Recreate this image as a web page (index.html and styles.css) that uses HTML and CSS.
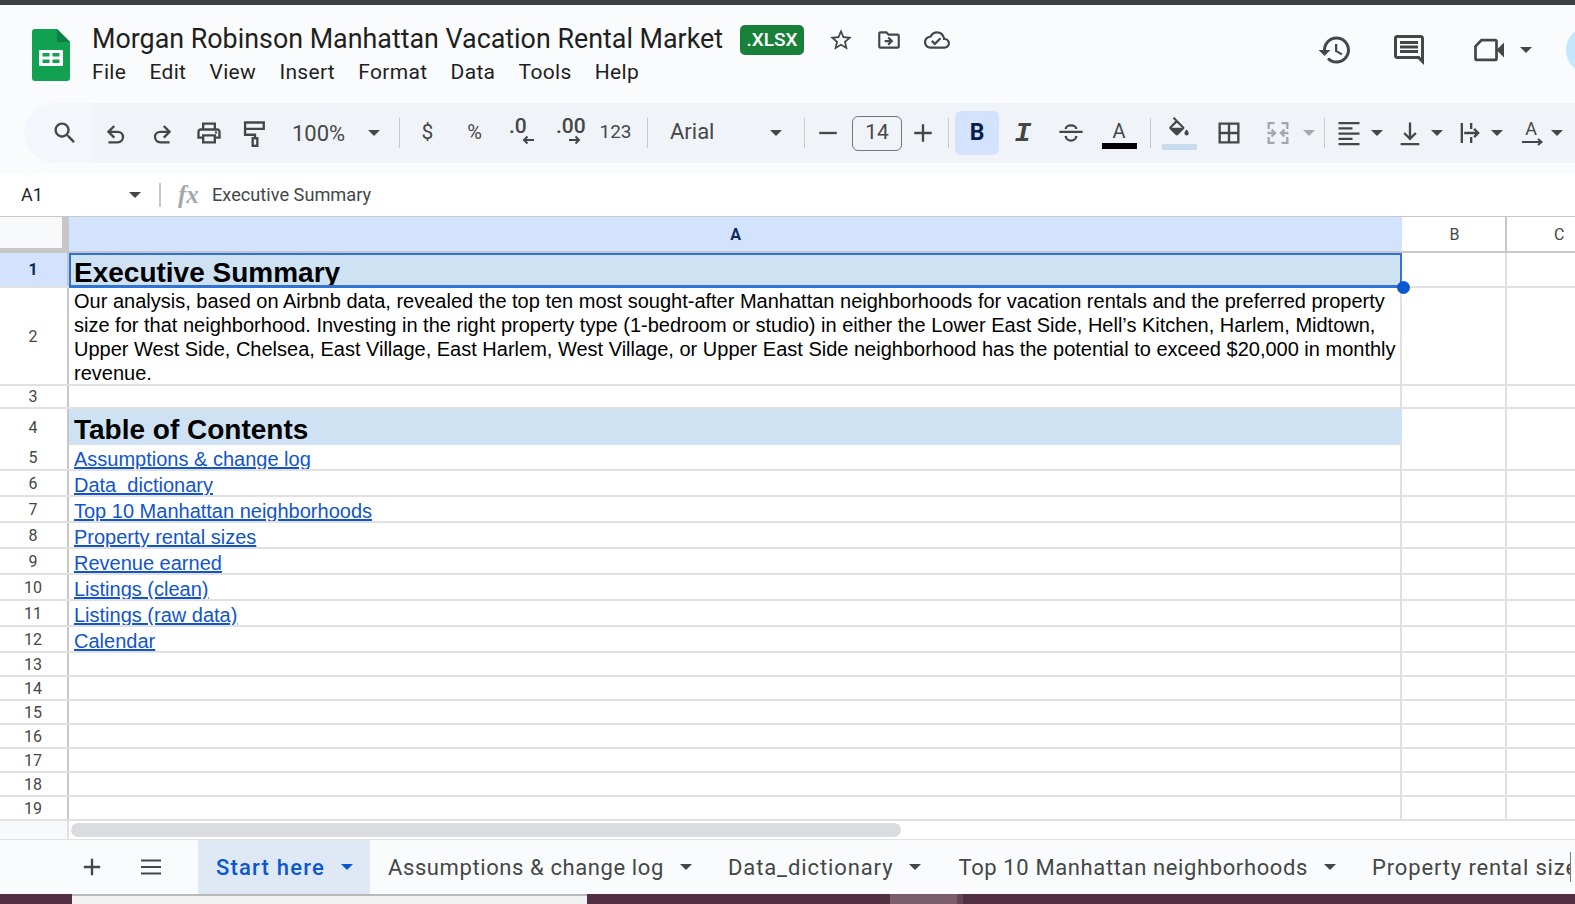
FILE: index.html
```html
<!DOCTYPE html>
<html>
<head>
	<meta charset="UTF-8">
	<title>Morgan Robinson Manhattan Vacation Rental Market</title>
	<link rel="stylesheet" href="styles.css">
</head>
<body>
	<div class="topline"></div>
	<header class="head">
		<svg class="logo" viewBox="0 0 38 52"><path fill="#12a150" d="M3 0h22l13 13v36a3 3 0 0 1-3 3H3a3 3 0 0 1-3-3V3a3 3 0 0 1 3-3z"/><path fill="#0b8043" d="M25 0l13 13H25z"/><path fill="#fff" fill-rule="evenodd" d="M8 21h22a1 1 0 0 1 1 1v14a1 1 0 0 1-1 1H8a1 1 0 0 1-1-1V22a1 1 0 0 1 1-1zm2.500 3v3.500h7V24zm10 0v3.500h7V24zm-10 6.500V34h7v-3.500zm10 0V34h7v-3.500z"/></svg>
		<div class="docinfo">
			<div class="titlerow">
				<span class="doctitle">Morgan Robinson Manhattan Vacation Rental Market</span>
				<span class="badge">.XLSX</span>
				<svg class="ic ic-star" viewBox="0 0 24 24"><path d="M22 9.240l-7.190-.620L12 2 9.190 8.630 2 9.240l5.460 4.730L5.820 21 12 17.270 18.180 21l-1.630-7.030L22 9.240zM12 15.400l-3.760 2.270 1-4.280-3.320-2.880 4.380-.380L12 6.100l1.710 4.040 4.380.380-3.320 2.880 1 4.280L12 15.400z"/></svg>
				<svg class="ic ic-move" viewBox="0 0 24 24"><path d="M20 6h-8l-2-2H4c-1.100 0-1.990.900-1.990 2L2 18c0 1.100.900 2 2 2h16c1.100 0 2-.900 2-2V8c0-1.100-.900-2-2-2zm0 12H4V6h5.170l2 2H20v10zm-8.010-9l-1.410 1.410L12.160 12H8v2h4.160l-1.590 1.590L11.990 17 16 13.010 11.990 9z"/></svg>
				<svg class="ic ic-cloud" viewBox="0 0 24 24"><path d="M19.350 10.040C18.670 6.590 15.640 4 12 4 9.110 4 6.600 5.640 5.350 8.040 2.340 8.360 0 10.910 0 14c0 3.310 2.690 6 6 6h13c2.760 0 5-2.240 5-5 0-2.640-2.050-4.780-4.650-4.960zM19 18H6c-2.210 0-4-1.790-4-4 0-2.050 1.530-3.760 3.560-3.970l1.070-.110.500-.950C8.080 7.140 9.940 6 12 6c2.620 0 4.880 1.860 5.390 4.430l.300 1.500 1.530.110c1.560.100 2.780 1.410 2.780 2.960 0 1.650-1.350 3-3 3zm-9-3.820l-2.090-2.090L6.500 13.500 10 17l6.010-6.010-1.410-1.410z"/></svg>
			</div>
			<nav class="menu">
				<a>File</a><a>Edit</a><a>View</a><a>Insert</a><a>Format</a><a>Data</a><a>Tools</a><a>Help</a>
			</nav>
		</div>
		<div class="headright">
			<svg class="big" viewBox="0 0 24 24"><path d="M13 3c-4.970 0-9 4.030-9 9H1l3.890 3.890.070.140L9 12H6c0-3.870 3.130-7 7-7s7 3.130 7 7-3.130 7-7 7c-1.930 0-3.680-.790-4.940-2.060l-1.420 1.420C8.270 19.990 10.510 21 13 21c4.970 0 9-4.030 9-9s-4.030-9-9-9zm-1 5v5l4.280 2.540.720-1.210-3.500-2.080V8H12z"/></svg>
			<svg class="big big-comment" viewBox="0 0 24 24"><path d="M21.990 4c0-1.100-.890-2-1.990-2H4c-1.100 0-2 .900-2 2v12c0 1.100.900 2 2 2h14l4 4-.010-18zM20 4v13.170L18.830 16H4V4h16zM6 12h12v2H6zm0-3h12v2H6zm0-3h12v2H6z"/></svg>
			<svg class="big big-video" viewBox="0 0 24 24"><path fill="none" stroke="#444746" stroke-width="1.800" d="M7 5.400H16a1 1 0 0 1 1 1v11.200a1 1 0 0 1-1 1H4a1 1 0 0 1-1-1V9.500z"/><path d="M17 12l5-5v10z"/></svg>
			<i class="caret caret-video"></i>
			<div class="avatar"></div>
		</div>
	</header>

	<div class="toolband">
		<div class="toolbar">
			<span class="t t-search"><svg viewBox="0 0 24 24"><path d="M15.500 14h-.790l-.280-.270C15.410 12.590 16 11.110 16 9.500 16 5.910 13.090 3 9.500 3S3 5.910 3 9.500 5.910 16 9.500 16c1.610 0 3.090-.590 4.230-1.570l.270.280v.790l5 4.990L20.490 19l-4.990-5zm-6 0C7.010 14 5 11.990 5 9.500S7.010 5 9.500 5 14 7.010 14 9.500 11.990 14 9.500 14z"/></svg></span>
			<span class="t t-undo"><svg class="line" viewBox="0 0 24 24"><path d="M10.500 6L5.500 11l5 5M5.500 11h8a4.500 4.500 0 0 1 0 9h-8"/></svg></span>
			<span class="t"><svg class="line" viewBox="0 0 24 24"><path d="M13.500 6l5 5-5 5M18.500 11h-8a4.500 4.500 0 0 0 0 9h8"/></svg></span>
			<span class="t t-print"><svg viewBox="0 0 24 24"><path d="M19 8h-1V3H6v5H5c-1.660 0-3 1.340-3 3v6h4v4h12v-4h4v-6c0-1.660-1.340-3-3-3zM8 5h8v3H8V5zm8 12v2H8v-4h8v2zm2-2v-2H6v2H4v-4c0-.550.450-1 1-1h14c.550 0 1 .450 1 1v4h-2z"/><circle cx="18" cy="11.500" r="1"/></svg></span>
			<span class="t"><svg class="line" viewBox="0 0 24 24"><path d="M3.500 3h16v5.500h-16zM3.500 8.500v5H12v3"/><rect x="10" y="16.500" width="4" height="6.500"/></svg></span>
			<span class="zoombox">100%<i class="caret"></i></span>
			<span class="sep sep-a"></span>
			<span class="t t-w47 t-dollar">$</span>
			<span class="t t-w47 t-pct">%</span>
			<span class="t t-w47 t-dec"><b>.0</b><svg viewBox="0 0 12 10"><path d="M12 5H2M5.500 1.500L2 5l3.500 3.500"/></svg></span>
			<span class="t t-w47 t-dec"><b>.00</b><svg viewBox="0 0 12 10"><path d="M0 5h10M6.500 1.500L10 5 6.500 8.500"/></svg></span>
			<span class="t t-w47 t-num">123</span>
			<span class="sep sep-b"></span>
			<span class="fontbox"><span class="fontname">Arial</span><i class="caret"></i></span>
			<span class="sep sep-c"></span>
			<span class="t t-sign"><svg class="line" viewBox="0 0 24 24"><path d="M4.500 12h15"/></svg></span>
			<span class="sizebox">14</span>
			<span class="t t-plus"><svg class="line" viewBox="0 0 24 24"><path d="M4.500 12h15M12 4.500v15"/></svg></span>
			<span class="sep sep-d"></span>
			<span class="t t-bold">B</span>
			<span class="t t-italic">I</span>
			<span class="t t-w48"><svg class="line" viewBox="0 0 24 24"><path d="M2 11h20M7.500 8.500a4.500 3 0 0 1 9 0M7.500 14.500a4.500 4 0 0 0 9 0"/></svg></span>
			<span class="t t-w48 t-color"><span>A</span><i class="bar bar-black"></i></span>
			<span class="sep sep-e"></span>
			<span class="t t-fill"><svg viewBox="0 0 24 24"><path d="M16.560 8.940L7.620 0 6.210 1.410l2.380 2.380-5.150 5.150c-.590.590-.590 1.540 0 2.120l5.500 5.500c.290.290.680.440 1.060.440s.770-.150 1.060-.440l5.500-5.500c.590-.580.590-1.530 0-2.120zM5.210 10L10 5.210 14.790 10H5.210zM19 11.500s-2 2.170-2 3.500c0 1.100.900 2 2 2s2-.900 2-2c0-1.330-2-3.500-2-3.500z"/></svg><i class="bar bar-fill"></i></span>
			<span class="t t-borders"><svg viewBox="0 0 24 24"><path d="M3 3v18h18V3H3zm8 16H5v-6h6v6zm0-8H5V5h6v6zm8 8h-6v-6h6v6zm0-8h-6V5h6v6z"/></svg></span>
			<span class="t t-merge"><svg class="line dim" viewBox="0 0 24 24"><path d="M9 3.500H4v5M15 3.500h5v5M9 20.500H4v-5M15 20.500h5v-5M3 12h6M6.500 9l3 3-3 3M21 12h-6M17.500 9l-3 3 3 3"/></svg></span>
			<span class="t t-mergedrop"><i class="caret caret-dim"></i></span>
			<span class="sep sep-f"></span>
			<span class="t t-ic"><svg class="line" viewBox="0 0 24 24"><path d="M3 3.500h18M3 8h12M3 12.500h18M3 17h12M3 21.500h18"/></svg></span>
			<span class="t t-drop"><i class="caret"></i></span>
			<span class="t t-ic t-s5"><svg class="line" viewBox="0 0 24 24"><path d="M12 3v14M7 12l5 5 5-5M4 21.500h16"/></svg></span>
			<span class="t t-drop t-d20"><i class="caret"></i></span>
			<span class="t t-ic t-s6"><svg class="line" viewBox="0 0 24 24"><path d="M5 3.500v17M13 3.500v5M13 15.500v5M7 12h12M15.500 8.500L19 12l-3.500 3.500"/></svg></span>
			<span class="t t-drop t-d20"><i class="caret"></i></span>
			<span class="t t-ic t-s7 t-rot"><span>A</span><svg class="line" viewBox="0 0 24 8"><path d="M3 4h19M19 1l3.500 3L19 7"/></svg></span>
			<span class="t t-drop t-d18"><i class="caret"></i></span>
		</div>
	</div>

	<div class="formula">
		<span class="namebox">A1</span>
		<i class="caret caret-name"></i>
		<span class="sep sep-name"></span>
		<span class="fx">fx</span>
		<span class="ftext">Executive Summary</span>
	</div>

	<main class="sheet">
		<div class="row colhead">
			<div class="rh corner"></div>
			<div class="ca on">A</div>
			<div class="cb">B</div>
			<div class="cc">C</div>
		</div>
		<div class="row r1">
			<div class="rh on">1</div>
			<div class="ca sel"><span class="h">Executive Summary</span><i class="handle"></i></div>
			<div class="cb"></div><div class="cc"></div>
		</div>
		<div class="row r2">
			<div class="rh">2</div>
			<div class="ca body">Our analysis, based on Airbnb data, revealed the top ten most sought-after Manhattan neighborhoods for vacation rentals and the preferred property size for that neighborhood. Investing in the right property type (1-bedroom or studio) in either the Lower East Side, Hell’s Kitchen, Harlem, Midtown, Upper West Side, Chelsea, East Village, East Harlem, West Village, or Upper East Side neighborhood has the potential to exceed $20,000 in monthly revenue.</div>
			<div class="cb"></div><div class="cc"></div>
		</div>
		<div class="row r3"><div class="rh">3</div><div class="ca"></div><div class="cb"></div><div class="cc"></div></div>
		<div class="row r4">
			<div class="rh">4</div>
			<div class="ca toc"><span class="h">Table of Contents</span></div>
			<div class="cb"></div><div class="cc"></div>
		</div>
		<div class="row rl"><div class="rh">5</div><div class="ca"><a>Assumptions &amp; change log</a></div><div class="cb"></div><div class="cc"></div></div>
		<div class="row rl"><div class="rh">6</div><div class="ca"><a>Data_dictionary</a></div><div class="cb"></div><div class="cc"></div></div>
		<div class="row rl"><div class="rh">7</div><div class="ca"><a>Top 10 Manhattan neighborhoods</a></div><div class="cb"></div><div class="cc"></div></div>
		<div class="row rl"><div class="rh">8</div><div class="ca"><a>Property rental sizes</a></div><div class="cb"></div><div class="cc"></div></div>
		<div class="row rl"><div class="rh">9</div><div class="ca"><a>Revenue earned</a></div><div class="cb"></div><div class="cc"></div></div>
		<div class="row rl"><div class="rh">10</div><div class="ca"><a>Listings (clean)</a></div><div class="cb"></div><div class="cc"></div></div>
		<div class="row rl"><div class="rh">11</div><div class="ca"><a>Listings (raw data)</a></div><div class="cb"></div><div class="cc"></div></div>
		<div class="row rl"><div class="rh">12</div><div class="ca"><a>Calendar</a></div><div class="cb"></div><div class="cc"></div></div>
		<div class="row re"><div class="rh">13</div><div class="ca"></div><div class="cb"></div><div class="cc"></div></div>
		<div class="row re"><div class="rh">14</div><div class="ca"></div><div class="cb"></div><div class="cc"></div></div>
		<div class="row re"><div class="rh">15</div><div class="ca"></div><div class="cb"></div><div class="cc"></div></div>
		<div class="row re"><div class="rh">16</div><div class="ca"></div><div class="cb"></div><div class="cc"></div></div>
		<div class="row re"><div class="rh">17</div><div class="ca"></div><div class="cb"></div><div class="cc"></div></div>
		<div class="row re"><div class="rh">18</div><div class="ca"></div><div class="cb"></div><div class="cc"></div></div>
		<div class="row re"><div class="rh">19</div><div class="ca"></div><div class="cb"></div><div class="cc"></div></div>
		<div class="scrollrow">
			<div class="scrollcorner"></div>
			<div class="thumb"></div>
		</div>
	</main>

	<footer class="tabs">
		<span class="addsheet"><svg class="line" viewBox="0 0 24 24"><path d="M5 12h14M12 5v14"/></svg></span>
		<span class="allsheets"><svg class="line" viewBox="0 0 24 24"><path d="M2 5.500h20M2 12h20M2 18.500h20"/></svg></span>
		<div class="tablist">
			<div class="tab active">Start here<i class="caret"></i></div>
			<div class="tab t2">Assumptions &amp; change log<i class="caret"></i></div>
			<div class="tab t3">Data_dictionary<i class="caret"></i></div>
			<div class="tab t4">Top 10 Manhattan neighborhoods<i class="caret"></i></div>
			<div class="tab t5">Property rental sizes</div>
		</div>
		<span class="tabend"></span>
	</footer>

	<div class="desk">
		<div class="win"></div>
		<div class="task"></div>
		<div class="task2"></div>
	</div>
</body>
</html>
```

FILE: styles.css
```css
*{
	box-sizing: border-box;
}
html,body{
	margin: 0;
	height: 904px;
	overflow: hidden;
	background: #fff;
}
body{
	font-family: Roboto, "Liberation Sans", sans-serif;
	color: #444746;
	display: flex;
	flex-direction: column;
}
svg{
	fill: #444746;
	display: block;
}
svg.line{
	fill: none;
	stroke: #444746;
	stroke-width: 2;
}
svg.dim{
	stroke: #a5a8ab;
}

.topline{
	height: 5px;
	background: #3c4043;
}

/* title + menus */
.head{
	height: 98px;
	background: #f9fbfd;
	display: flex;
	position: relative;
}
.logo{
	width: 38px;
	height: 52px;
	margin: 24px 0 0 32px;
}
.docinfo{
	margin-left: 22px;
}
.titlerow{
	display: flex;
	align-items: center;
	height: 30px;
	margin-top: 19px;
}
.doctitle{
	font-size: 26.85px;
	color: #1f1f1f;
	white-space: nowrap;
	width: 648px;
}
.badge{
	width: 64px;
	height: 30px;
	margin-top: 2px;
	border-radius: 5px;
	background: #188038;
	color: #fff;
	font-size: 19px;
	font-weight: 500;
	line-height: 30px;
	text-align: center;
}
.ic{
	width: 26px;
	height: 26px;
	margin-top: 2px;
}
.ic-star{
	margin-left: 24px;
}
.ic-move,.ic-cloud{
	margin-left: 22px;
}
.menu{
	display: flex;
	margin-top: 6px;
	font-size: 21px;
	letter-spacing: 0.3px;
	color: #1f1f1f;
}
.menu a{
	margin-right: 23.3px;
	white-space: nowrap;
}
.headright{
	position: absolute;
	top: 21px;
	left: 1317px;
	display: flex;
	align-items: center;
}
.big{
	width: 36px;
	height: 36px;
}
.big-comment{
	margin-left: 38px;
}
.big-video{
	margin-left: 44px;
}
.caret{
	display: inline-block;
	width: 0;
	height: 0;
	border-left: 6px solid transparent;
	border-right: 6px solid transparent;
	border-top: 6px solid #444746;
}
.caret-video{
	margin-left: 13px;
}
.avatar{
	width: 48px;
	height: 48px;
	flex: none;
	border-radius: 50%;
	background: #c2e7ff;
	margin-left: 34px;
}

/* toolbar */
.toolband{
	height: 72px;
	background: #f9fbfd;
}
.toolbar{
	height: 60px;
	margin-left: 24px;
	width: 1620px;
	padding-left: 18px;
	border-radius: 30px;
	background: linear-gradient(90deg, #f3f6fb 68px, #f0f4f9 68px);
	display: flex;
	align-items: center;
}
.t{
	width: 46px;
	height: 44px;
	flex: none;
	display: flex;
	align-items: center;
	justify-content: center;
	font-size: 20px;
	position: relative;
}
.t svg{
	width: 28px;
	height: 28px;
}
.t-undo{ margin-left: 5px; }
.t-print{ margin-left: 1px; }
.t-w47{ width: 47px; }
.t-w48{ width: 48px; }
.t-dollar{ font-size: 21px; padding-bottom: 3px; }
.t-pct{ font-size: 20px; padding-bottom: 3px; }
.t-num{ font-size: 19px; padding-bottom: 3px; }
.zoombox{
	width: 114px;
	flex: none;
	padding-left: 14px;
	font-size: 22px;
	display: flex;
	align-items: center;
	justify-content: space-between;
	padding-right: 12px;
}
.sep{
	width: 1px;
	height: 30px;
	flex: none;
	background: #c7c7c7;
}
.sep-a{ margin: 0 4px 0 7px; }
.sep-b{ margin-left: 8px; }
.fontbox{
	width: 149px;
	flex: none;
	padding: 0 15px 0 22px;
	font-size: 22px;
	display: flex;
	align-items: center;
	justify-content: space-between;
}
.fontname{
	padding-bottom: 3px;
}
.sep-c{ margin-left: 7px; }
.sizebox{
	width: 50px;
	height: 35px;
	flex: none;
	margin-left: 1px;
	border: 1px solid #747775;
	border-radius: 6px;
	text-align: center;
	font-size: 21px;
	line-height: 31px;
}
.t-plus{ width: 42px; }
.sep-d{ margin-left: 4px; }
.t-bold{
	margin-left: 6px;
	width: 44px;
	background: #d3e3fd;
	border-radius: 6px;
	color: #041e49;
	font-weight: 700;
	font-size: 23px;
	padding-bottom: 2px;
}
.t-italic{
	margin-left: 1px;
	font-family: "Liberation Mono", monospace;
	font-style: italic;
	font-weight: 700;
	font-size: 28px;
}
.t-italic + .t-w48{ margin-left: 1px; }
.t-color{
	flex-direction: column;
	font-size: 20px;
}
.t-color span{
	line-height: 22px;
	margin-top: 2px;
}
.bar{
	display: block;
	width: 35px;
	height: 6px;
	margin-top: 1px;
}
.bar-black{ background: #000; }
.bar-fill{ background: #c9dcef; }
.sep-e{ margin-left: 7px; }
.t-fill{
	margin-left: 5px;
	flex-direction: column;
}
.t-fill svg{ width: 26px; height: 26px; }
.t-borders{ margin-left: 4px; }
.t-merge{ margin-left: 3px; }
.t-mergedrop{ width: 15px; }
.caret-dim{ border-top-color: #a5a8ab; }
.sep-f{ margin-left: 8px; }
.t-ic{ width: 34px; margin-left: 7px; }
.t-s5{ margin-left: 5px; }
.t-s6{ margin-left: 6px; }
.t-s7{ margin-left: 7px; }
.t-drop{ width: 22px; }
.t-d20{ width: 20px; }
.t-d18{ width: 18px; }
.t-dec{
	flex-direction: column;
	align-items: flex-start;
	justify-content: flex-start;
	padding: 5px 0 0 11px;
}
.t-dec b{
	font-weight: 500;
	font-size: 21px;
	line-height: 20px;
}
.t-dec svg{
	width: 12px;
	height: 10px;
	fill: none;
	stroke: #444746;
	stroke-width: 2;
	margin: -1px 0 0 13px;
}
.t-rot{
	flex-direction: column;
	font-size: 18px;
}
.t-rot span{ line-height: 18px; }
.t-rot svg{ width: 28px; height: 8px; }

/* formula bar */
.formula{
	height: 42px;
	padding-bottom: 2px;
	background: #fff;
	display: flex;
	align-items: center;
	border-bottom: 1px solid #c7c7c7;
	font-size: 18px;
	color: #1f1f1f;
}
.namebox{
	width: 129px;
	padding-left: 21px;
}
.caret-name{
	margin-right: 18px;
}
.sep-name{
	width: 2px;
	height: 24px;
}
.fx{
	font-family: "Liberation Serif", serif;
	font-style: italic;
	font-weight: 700;
	font-size: 25px;
	color: #a5a8ab;
	margin-left: 17px;
	width: 34px;
}
.ftext{
	font-size: 18.2px;
	color: #444746;
}

/* grid */
.sheet{
	flex: 1;
	min-height: 0;
}
.row{
	display: grid;
	grid-template-columns: 69px 1333px 105px 1fr;
	border-bottom: 2px solid #e1e1e1;
}
.row > div{
	min-width: 0;
	overflow: hidden;
}
.rh{
	background: #fff;
	border-right: 2px solid #c7c7c7;
	text-align: center;
	font-size: 16px;
	color: #444746;
	display: flex;
	align-items: center;
	justify-content: center;
	padding-right: 1px;
}
.rh.on{
	background: #d3e3fd;
	color: #0b2a5b;
	font-weight: 700;
}
.ca{
	border-right: 2px solid #e1e1e1;
}
.cb{
	border-right: 2px solid #e1e1e1;
}
.colhead{
	height: 36px;
	border-bottom: 2px solid #c7c7c7;
	font-size: 16px;
}
.colhead > div{
	display: flex;
	align-items: center;
	justify-content: center;
}
.colhead .cb{
	border-right-color: #c7c7c7;
	padding-left: 2px;
}
.corner{
	background: #f8f9fa;
	border-right: 7px solid #c7c7c7;
	border-bottom: 5px solid #c7c7c7;
	margin-bottom: -2px;
}
.ca.on{
	background: #d3e3fd;
	color: #0b2a5b;
	font-weight: 700;
	border-right: 0;
}
.colhead .cc{
	justify-content: flex-start;
	padding-left: 47px;
}
.r1{ height: 35px; }
.r2{ height: 98px; }
.r3{ height: 23px; }
.r4{ height: 36px; border-bottom: 0; }
.rl{ height: 26px; }
.re{ height: 24px; }
.row > .sel{
	background: #cfe2f3;
	border: 2px solid #2f73d4;
	border-bottom-width: 3px;
	margin-bottom: -2px;
	position: relative;
	overflow: visible;
	padding-left: 3px;
}
.h{
	font-family: "Liberation Sans", sans-serif;
	font-weight: 700;
	font-size: 28px;
	line-height: 35px;
	color: #000;
	display: block;
	height: 30px;
	overflow: hidden;
	white-space: nowrap;
}
.handle{
	position: absolute;
	right: -10px;
	bottom: -9px;
	width: 13px;
	height: 13px;
	border-radius: 50%;
	background: #0b57d0;
	z-index: 2;
}
.body{
	font-family: "Liberation Sans", sans-serif;
	font-size: 20px;
	line-height: 24px;
	color: #000;
	padding: 1px 2px 0 5px;
}
.row > .toc{
	background: #cfe2f3;
	padding-left: 5px;
	border-right: 0;
}
.toc .h{
	height: 36px;
	line-height: 42px;
}
.rl .ca{
	font-family: "Liberation Sans", sans-serif;
	font-size: 20px;
	line-height: 28px;
	padding-left: 5px;
}
.rl a{
	color: #1155cc;
	text-decoration: underline;
}
.scrollrow{
	display: flex;
	height: 18px;
}
.scrollcorner{
	width: 69px;
	background: #f8f9fa;
	border-right: 2px solid #e1e1e1;
}
.thumb{
	width: 830px;
	height: 14px;
	margin: 2px 0 0 2px;
	background: #dadce0;
	border-radius: 7px;
}

/* sheet tabs */
.tabs{
	height: 55px;
	flex: none;
	background: #f9fbfd;
	border-top: 1px solid #e1e1e1;
	display: flex;
	align-items: stretch;
	font-size: 22px;
	letter-spacing: 0.6px;
	color: #444746;
	white-space: nowrap;
	overflow: hidden;
}
.addsheet{
	margin-left: 78px;
	width: 28px;
	display: flex;
	align-items: center;
}
.addsheet svg{ width: 28px; height: 28px; }
.allsheets{
	margin-left: 33px;
	width: 24px;
	display: flex;
	align-items: center;
}
.allsheets svg{ width: 24px; height: 24px; }
.tablist{
	display: flex;
	margin-left: 35px;
	width: 1372px;
	overflow: hidden;
}
.tabend{
	width: 1px;
	height: 30px;
	margin-top: 12px;
	background: #747775;
}
.tab{
	display: flex;
	align-items: center;
	padding: 0 18px;
	flex: none;
}
.tab .caret{
	margin-left: 16px;
}
.active{
	width: 172px;
	background: #dfe8f5;
	color: #0b57d0;
	font-weight: 500;
	letter-spacing: 1.2px;
}
.active .caret{
	border-top-color: #0b57d0;
}
.t3{
	letter-spacing: 0.9px;
}
.t4{
	margin-left: 1px;
	letter-spacing: 0.62px;
}
.t5{
	letter-spacing: 0.85px;
}
.desk{
	height: 10px;
	flex: none;
	background: #533041;
	display: flex;
}
.win{
	width: 515px;
	margin-left: 72px;
	background: #f1f1f1;
	border-top: 2px solid #b9b9b9;
}
.task{
	width: 67px;
	margin-left: 303px;
	background: #7a5c6b;
}
.task2{
	width: 6px;
	background: #654553;
}
```
